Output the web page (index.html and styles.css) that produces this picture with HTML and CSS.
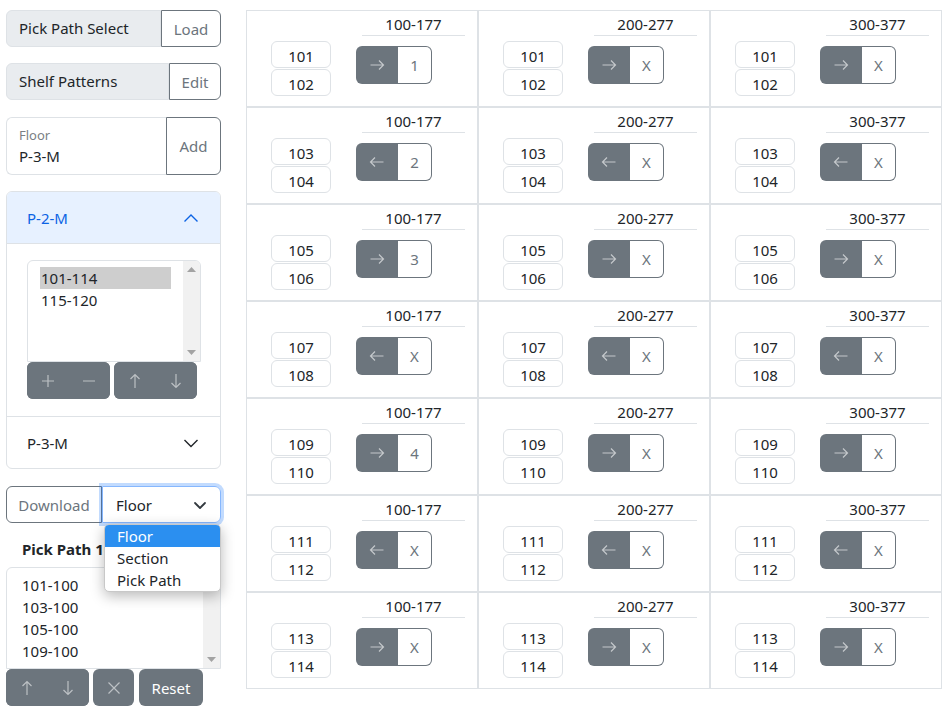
FILE: index.html
```html
<!DOCTYPE html>
<html>
<head>
<meta charset="utf-8">
<link rel="stylesheet" href="styles.css">
</head>
<body>
<div class="page">
  <aside class="side">
    <div class="igroup">
      <span class="igtext w155">Pick Path Select</span>
      <button class="obtn grow">Load</button>
    </div>
    <div class="igroup mt16">
      <span class="igtext w163">Shelf Patterns</span>
      <button class="obtn grow">Edit</button>
    </div>
    <div class="igroup floatgroup">
      <div class="floating">
        <span class="flabel">Floor</span>
        <span class="fval">P-3-M</span>
      </div>
      <button class="obtn grow">Add</button>
    </div>

    <div class="accordion">
      <div class="acc-head active">
        <span>P-2-M</span>
        <svg class="chev" width="16" height="16" viewBox="0 0 16 16"><polyline points="1.5,11.5 8,5 14.5,11.5" fill="none" stroke="currentColor" stroke-width="1.4"/></svg>
      </div>
      <div class="acc-body">
        <div class="listbox lb1">
          <div class="opts">
            <div class="opt sel">101-114</div>
            <div class="opt">115-120</div>
          </div>
          <div class="sbar">
            <svg width="9" height="5" viewBox="0 0 9 5"><polygon points="0,5 4.5,0 9,5" fill="#a3a3a3"/></svg>
            <svg width="9" height="5" viewBox="0 0 9 5"><polygon points="0,0 4.5,5 9,0" fill="#a3a3a3"/></svg>
          </div>
        </div>
        <div class="btnrow">
          <div class="bgroup w83">
            <button class="dbtn"><svg width="14" height="14" viewBox="0 0 14 14"><path d="M7 1v12M1 7h12" stroke="currentColor" stroke-width="1.2"/></svg></button>
            <button class="dbtn"><svg width="14" height="14" viewBox="0 0 14 14"><path d="M1 7h12" stroke="currentColor" stroke-width="1.2"/></svg></button>
          </div>
          <div class="bgroup w83">
            <button class="dbtn"><svg width="14" height="16" viewBox="0 0 14 16"><path d="M7 15V1.5M2.5 6L7 1.5 11.5 6" fill="none" stroke="currentColor" stroke-width="1.2"/></svg></button>
            <button class="dbtn"><svg width="14" height="16" viewBox="0 0 14 16"><path d="M7 1v13.5M2.5 10L7 14.5 11.5 10" fill="none" stroke="currentColor" stroke-width="1.2"/></svg></button>
          </div>
        </div>
      </div>
      <div class="acc-head last">
        <span>P-3-M</span>
        <svg class="chev" width="16" height="16" viewBox="0 0 16 16"><polyline points="1.5,5 8,11.5 14.5,5" fill="none" stroke="currentColor" stroke-width="1.4"/></svg>
      </div>
    </div>

    <div class="igroup dl">
      <button class="obtn w96">Download</button>
      <div class="fselect">
        <span>Floor</span>
        <svg width="14" height="10" viewBox="0 0 14 10"><polyline points="2,3 7,8 12,3" fill="none" stroke="#343a40" stroke-width="1.8" stroke-linecap="round" stroke-linejoin="round"/></svg>
      </div>
      <div class="popup">
        <div class="popt hl">Floor</div>
        <div class="popt">Section</div>
        <div class="popt">Pick Path</div>
      </div>
    </div>

    <div class="plabel">Pick Path 100</div>
    <div class="listbox lb2">
      <div class="opts">
        <div class="opt">101-100</div>
        <div class="opt">103-100</div>
        <div class="opt">105-100</div>
        <div class="opt">109-100</div>
      </div>
      <div class="sbar">
        <svg width="9" height="5" viewBox="0 0 9 5"><polygon points="0,5 4.5,0 9,5" fill="#a3a3a3"/></svg>
        <svg width="9" height="5" viewBox="0 0 9 5"><polygon points="0,0 4.5,5 9,0" fill="#a3a3a3"/></svg>
      </div>
    </div>
    <div class="btnrow bottom">
      <div class="bgroup w83">
        <button class="dbtn"><svg width="14" height="16" viewBox="0 0 14 16"><path d="M7 15V1.5M2.5 6L7 1.5 11.5 6" fill="none" stroke="currentColor" stroke-width="1.2"/></svg></button>
        <button class="dbtn"><svg width="14" height="16" viewBox="0 0 14 16"><path d="M7 1v13.5M2.5 10L7 14.5 11.5 10" fill="none" stroke="currentColor" stroke-width="1.2"/></svg></button>
      </div>
      <div class="bgroup w41">
        <button class="dbtn"><svg width="14" height="14" viewBox="0 0 14 14"><path d="M1.5 1.5l11 11M12.5 1.5l-11 11" stroke="currentColor" stroke-width="1.2"/></svg></button>
      </div>
      <div class="bgroup w64">
        <button class="dbtn reset">Reset</button>
      </div>
    </div>
  </aside>

  <main class="grid">
    <!-- row 1 -->
    <div class="cell"><div class="chead">100-177</div><div class="crow"><div class="pair"><div class="box">101</div><div class="box">102</div></div><div class="tg"><span class="tg-dir"><svg width="16" height="12" viewBox="0 0 16 12"><path d="M1.5 6h13M10 1.5L14.5 6 10 10.5" fill="none" stroke="currentColor" stroke-width="1.2"/></svg></span><span class="tg-val">1</span></div></div></div>
    <div class="cell"><div class="chead">200-277</div><div class="crow"><div class="pair"><div class="box">101</div><div class="box">102</div></div><div class="tg"><span class="tg-dir"><svg width="16" height="12" viewBox="0 0 16 12"><path d="M1.5 6h13M10 1.5L14.5 6 10 10.5" fill="none" stroke="currentColor" stroke-width="1.2"/></svg></span><span class="tg-val">X</span></div></div></div>
    <div class="cell"><div class="chead">300-377</div><div class="crow"><div class="pair"><div class="box">101</div><div class="box">102</div></div><div class="tg"><span class="tg-dir"><svg width="16" height="12" viewBox="0 0 16 12"><path d="M1.5 6h13M10 1.5L14.5 6 10 10.5" fill="none" stroke="currentColor" stroke-width="1.2"/></svg></span><span class="tg-val">X</span></div></div></div>
    <!-- row 2 -->
    <div class="cell"><div class="chead">100-177</div><div class="crow"><div class="pair"><div class="box">103</div><div class="box">104</div></div><div class="tg"><span class="tg-dir"><svg width="16" height="12" viewBox="0 0 16 12"><path d="M14.5 6h-13M6 1.5L1.5 6 6 10.5" fill="none" stroke="currentColor" stroke-width="1.2"/></svg></span><span class="tg-val">2</span></div></div></div>
    <div class="cell"><div class="chead">200-277</div><div class="crow"><div class="pair"><div class="box">103</div><div class="box">104</div></div><div class="tg"><span class="tg-dir"><svg width="16" height="12" viewBox="0 0 16 12"><path d="M14.5 6h-13M6 1.5L1.5 6 6 10.5" fill="none" stroke="currentColor" stroke-width="1.2"/></svg></span><span class="tg-val">X</span></div></div></div>
    <div class="cell"><div class="chead">300-377</div><div class="crow"><div class="pair"><div class="box">103</div><div class="box">104</div></div><div class="tg"><span class="tg-dir"><svg width="16" height="12" viewBox="0 0 16 12"><path d="M14.5 6h-13M6 1.5L1.5 6 6 10.5" fill="none" stroke="currentColor" stroke-width="1.2"/></svg></span><span class="tg-val">X</span></div></div></div>
    <!-- row 3 -->
    <div class="cell"><div class="chead">100-177</div><div class="crow"><div class="pair"><div class="box">105</div><div class="box">106</div></div><div class="tg"><span class="tg-dir"><svg width="16" height="12" viewBox="0 0 16 12"><path d="M1.5 6h13M10 1.5L14.5 6 10 10.5" fill="none" stroke="currentColor" stroke-width="1.2"/></svg></span><span class="tg-val">3</span></div></div></div>
    <div class="cell"><div class="chead">200-277</div><div class="crow"><div class="pair"><div class="box">105</div><div class="box">106</div></div><div class="tg"><span class="tg-dir"><svg width="16" height="12" viewBox="0 0 16 12"><path d="M1.5 6h13M10 1.5L14.5 6 10 10.5" fill="none" stroke="currentColor" stroke-width="1.2"/></svg></span><span class="tg-val">X</span></div></div></div>
    <div class="cell"><div class="chead">300-377</div><div class="crow"><div class="pair"><div class="box">105</div><div class="box">106</div></div><div class="tg"><span class="tg-dir"><svg width="16" height="12" viewBox="0 0 16 12"><path d="M1.5 6h13M10 1.5L14.5 6 10 10.5" fill="none" stroke="currentColor" stroke-width="1.2"/></svg></span><span class="tg-val">X</span></div></div></div>
    <!-- row 4 -->
    <div class="cell"><div class="chead">100-177</div><div class="crow"><div class="pair"><div class="box">107</div><div class="box">108</div></div><div class="tg"><span class="tg-dir"><svg width="16" height="12" viewBox="0 0 16 12"><path d="M14.5 6h-13M6 1.5L1.5 6 6 10.5" fill="none" stroke="currentColor" stroke-width="1.2"/></svg></span><span class="tg-val">X</span></div></div></div>
    <div class="cell"><div class="chead">200-277</div><div class="crow"><div class="pair"><div class="box">107</div><div class="box">108</div></div><div class="tg"><span class="tg-dir"><svg width="16" height="12" viewBox="0 0 16 12"><path d="M14.5 6h-13M6 1.5L1.5 6 6 10.5" fill="none" stroke="currentColor" stroke-width="1.2"/></svg></span><span class="tg-val">X</span></div></div></div>
    <div class="cell"><div class="chead">300-377</div><div class="crow"><div class="pair"><div class="box">107</div><div class="box">108</div></div><div class="tg"><span class="tg-dir"><svg width="16" height="12" viewBox="0 0 16 12"><path d="M14.5 6h-13M6 1.5L1.5 6 6 10.5" fill="none" stroke="currentColor" stroke-width="1.2"/></svg></span><span class="tg-val">X</span></div></div></div>
    <!-- row 5 -->
    <div class="cell"><div class="chead">100-177</div><div class="crow"><div class="pair"><div class="box">109</div><div class="box">110</div></div><div class="tg"><span class="tg-dir"><svg width="16" height="12" viewBox="0 0 16 12"><path d="M1.5 6h13M10 1.5L14.5 6 10 10.5" fill="none" stroke="currentColor" stroke-width="1.2"/></svg></span><span class="tg-val">4</span></div></div></div>
    <div class="cell"><div class="chead">200-277</div><div class="crow"><div class="pair"><div class="box">109</div><div class="box">110</div></div><div class="tg"><span class="tg-dir"><svg width="16" height="12" viewBox="0 0 16 12"><path d="M1.5 6h13M10 1.5L14.5 6 10 10.5" fill="none" stroke="currentColor" stroke-width="1.2"/></svg></span><span class="tg-val">X</span></div></div></div>
    <div class="cell"><div class="chead">300-377</div><div class="crow"><div class="pair"><div class="box">109</div><div class="box">110</div></div><div class="tg"><span class="tg-dir"><svg width="16" height="12" viewBox="0 0 16 12"><path d="M1.5 6h13M10 1.5L14.5 6 10 10.5" fill="none" stroke="currentColor" stroke-width="1.2"/></svg></span><span class="tg-val">X</span></div></div></div>
    <!-- row 6 -->
    <div class="cell"><div class="chead">100-177</div><div class="crow"><div class="pair"><div class="box">111</div><div class="box">112</div></div><div class="tg"><span class="tg-dir"><svg width="16" height="12" viewBox="0 0 16 12"><path d="M14.5 6h-13M6 1.5L1.5 6 6 10.5" fill="none" stroke="currentColor" stroke-width="1.2"/></svg></span><span class="tg-val">X</span></div></div></div>
    <div class="cell"><div class="chead">200-277</div><div class="crow"><div class="pair"><div class="box">111</div><div class="box">112</div></div><div class="tg"><span class="tg-dir"><svg width="16" height="12" viewBox="0 0 16 12"><path d="M14.5 6h-13M6 1.5L1.5 6 6 10.5" fill="none" stroke="currentColor" stroke-width="1.2"/></svg></span><span class="tg-val">X</span></div></div></div>
    <div class="cell"><div class="chead">300-377</div><div class="crow"><div class="pair"><div class="box">111</div><div class="box">112</div></div><div class="tg"><span class="tg-dir"><svg width="16" height="12" viewBox="0 0 16 12"><path d="M14.5 6h-13M6 1.5L1.5 6 6 10.5" fill="none" stroke="currentColor" stroke-width="1.2"/></svg></span><span class="tg-val">X</span></div></div></div>
    <!-- row 7 -->
    <div class="cell"><div class="chead">100-177</div><div class="crow"><div class="pair"><div class="box">113</div><div class="box">114</div></div><div class="tg"><span class="tg-dir"><svg width="16" height="12" viewBox="0 0 16 12"><path d="M1.5 6h13M10 1.5L14.5 6 10 10.5" fill="none" stroke="currentColor" stroke-width="1.2"/></svg></span><span class="tg-val">X</span></div></div></div>
    <div class="cell"><div class="chead">200-277</div><div class="crow"><div class="pair"><div class="box">113</div><div class="box">114</div></div><div class="tg"><span class="tg-dir"><svg width="16" height="12" viewBox="0 0 16 12"><path d="M1.5 6h13M10 1.5L14.5 6 10 10.5" fill="none" stroke="currentColor" stroke-width="1.2"/></svg></span><span class="tg-val">X</span></div></div></div>
    <div class="cell"><div class="chead">300-377</div><div class="crow"><div class="pair"><div class="box">113</div><div class="box">114</div></div><div class="tg"><span class="tg-dir"><svg width="16" height="12" viewBox="0 0 16 12"><path d="M1.5 6h13M10 1.5L14.5 6 10 10.5" fill="none" stroke="currentColor" stroke-width="1.2"/></svg></span><span class="tg-val">X</span></div></div></div>
  </main>
</div>
</body>
</html>
```

FILE: styles.css
```css
* { box-sizing: border-box; }
html, body { margin: 0; padding: 0; background: #fff; }
body {
  font-family: "Noto Sans", "Open Sans", sans-serif;
  font-size: 15px;
  line-height: 22px;
  color: #212529;
}
button { font: inherit; margin: 0; }

.page {
  display: flex;
  align-items: flex-start;
  gap: 25px;
  padding: 10px 0 0 6px;
}

/* ---------- left column ---------- */
.side {
  width: 215px;
  display: flex;
  flex-direction: column;
}
.igroup {
  display: flex;
  height: 37px;
  position: relative;
}
.mt16 { margin-top: 16px; }
.igtext {
  display: flex;
  align-items: center;
  padding: 0 12px 1px 12px;
  background: #e9ecef;
  border: 1px solid #dee2e6;
  border-radius: 6px 0 0 6px;
  white-space: nowrap;
}
.w155 { width: 155px; }
.w163 { width: 163px; }
.obtn {
  background: #fff;
  color: #6c757d;
  border: 1px solid #6c757d;
  border-radius: 0 6px 6px 0;
  padding: 0;
  text-align: center;
}
.grow { flex: 1; }

.floatgroup { margin-top: 17px; height: 58px; }
.floating {
  width: 160px;
  border: 1px solid #dee2e6;
  border-right: none;
  border-radius: 6px 0 0 6px;
  padding: 8px 12px 0 12px;
  display: flex;
  flex-direction: column;
}
.flabel { font-size: 13px; line-height: 18px; color: #7a7f84; }
.fval { line-height: 22px; margin-top: 1px; }

/* accordion */
.accordion {
  margin-top: 16px;
  border: 1px solid #dee2e6;
  border-radius: 6px;
  overflow: hidden;
}
.acc-head {
  height: 52px;
  display: flex;
  align-items: center;
  justify-content: space-between;
  padding: 0 21px 0 20px;
  color: #212529;
}
.acc-head.active {
  background: #e7f1ff;
  color: #0c63e4;
  border-bottom: 1px solid #dee2e6;
}
.acc-head.last {
  border-top: 1px solid #dee2e6;
  height: 52px;
}
.acc-body {
  padding: 16px 20px 17px 20px;
  height: 172px;
}

.listbox {
  display: flex;
  border: 1px solid #dee2e6;
  border-radius: 6px 6px 0 0;
  overflow: hidden;
  background: #fff;
}
.lb1 { width: 174px; height: 102px; }
.lb2 { width: 215px; height: 102px; border-radius: 6px 6px 0 0; }
.opts { flex: 1; padding: 6px 12px 0 12px; }
.lb2 .opts { padding: 6px 14px 0 14px; }
.opt { line-height: 22px; height: 22px; padding-left: 1px; }
.opt.sel { background: #cecece; }
.sbar {
  width: 17px;
  background: #f1f1f1;
  display: flex;
  flex-direction: column;
  justify-content: space-between;
  align-items: center;
  padding: 6px 0 6px 0;
}

.btnrow { display: flex; gap: 4px; height: 37px; }
.btnrow.bottom { gap: 4px; }
.bgroup {
  display: flex;
  background: #6c757d;
  border-radius: 6px;
  overflow: hidden;
}
.w83 { width: 83px; }
.w41 { width: 41px; }
.w64 { width: 64px; margin-left: 1px; }
.dbtn {
  flex: 1;
  background: #6c757d;
  border: none;
  color: rgba(255, 255, 255, 0.55);
  display: flex;
  align-items: center;
  justify-content: center;
  padding: 0;
}
.dbtn.reset { color: #fff; }

/* download */
.dl { margin-top: 17px; }
.w96 { width: 96px; border-radius: 6px 0 0 6px; }
.fselect {
  flex: 1;
  border: 1px solid #86b7fe;
  border-radius: 0 6px 6px 0;
  box-shadow: 0 0 0 3px rgba(13, 110, 253, 0.25);
  display: flex;
  align-items: center;
  justify-content: space-between;
  padding: 0 13px 0 13px;
  position: relative;
  z-index: 1;
}
.popup {
  position: absolute;
  left: 98px;
  top: 38px;
  width: 117px;
  background: #fff;
  border: 1px solid #c8c8c8;
  border-radius: 5px;
  box-shadow: 0 4px 14px rgba(0, 0, 0, 0.28);
  overflow: hidden;
  z-index: 5;
}
.popt { height: 22px; line-height: 22px; padding-left: 12px; }
.popt.hl { background: #2b8ff0; color: #fff; }

.plabel {
  margin-top: 14px;
  width: 98px;
  height: 24px;
  line-height: 24px;
  font-weight: 700;
  padding-left: 16px;
  margin-bottom: 6px;
  white-space: nowrap;
  overflow: hidden;
}

/* ---------- grid ---------- */
.grid {
  display: grid;
  grid-template-columns: repeat(3, 232px);
  grid-auto-rows: 97px;
}
.cell {
  border: 1px solid #dee2e6;
}
.chead {
  margin-left: 115px;
  width: 103px;
  height: 25px;
  padding-top: 1px;
  line-height: 24px;
  text-align: center;
  border-bottom: 1px solid #dee2e6;
}
.crow {
  display: flex;
  align-items: flex-start;
  margin-top: 5px;
  padding-left: 24px;
  gap: 25px;
}
.pair { display: flex; flex-direction: column; gap: 1px; width: 60px; }
.box {
  height: 27px;
  border: 1px solid #dee2e6;
  border-radius: 6px;
  text-align: center;
  padding-top: 2px;
  line-height: 25px;
}
.tg {
  display: flex;
  height: 38px;
  margin-top: 5px;
}
.tg-dir {
  width: 42px;
  background: #6c757d;
  border-radius: 6px 0 0 6px;
  color: rgba(255, 255, 255, 0.6);
  display: flex;
  align-items: center;
  justify-content: center;
}
.tg-val {
  width: 34px;
  border: 1px solid #6c757d;
  border-left: none;
  border-radius: 0 6px 6px 0;
  color: #6c757d;
  display: flex;
  align-items: center;
  justify-content: center;
}
```
